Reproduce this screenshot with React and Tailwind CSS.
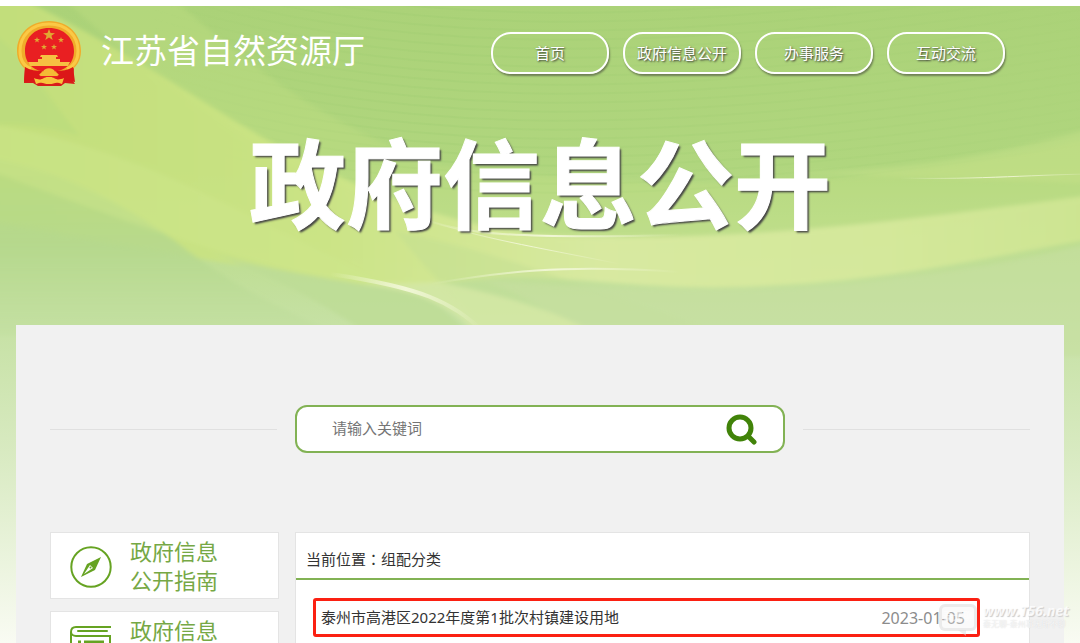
const navItems = ['首页', '政府信息公开', '办事服务', '互动交流'];

const notices = [
  { title: '泰州市高港区2022年度第1批次村镇建设用地', date: '2023-01-05' },
];

const ripples = Array.from({ length: 22 }, (_, i) => i * 9);

function Backdrop() {
  return (
    <svg
      className="absolute inset-0 h-full w-full"
      viewBox="0 0 1080 637"
      preserveAspectRatio="none"
      aria-hidden="true"
    >
      <defs>
        <linearGradient id="base" x1="0" y1="0" x2="0" y2="1">
          <stop offset="0" stopColor="#abd278" />
          <stop offset="0.25" stopColor="#b0d67e" />
          <stop offset="0.35" stopColor="#bbdc8c" />
          <stop offset="0.5" stopColor="#c6e1a4" />
          <stop offset="0.7" stopColor="#d8eac1" />
          <stop offset="1" stopColor="#f9fbf3" />
        </linearGradient>
        <linearGradient id="ribbon" x1="0" y1="0" x2="1" y2="0">
          <stop offset="0" stopColor="#c5e07c" />
          <stop offset="0.3" stopColor="#cde585" />
          <stop offset="0.55" stopColor="#dbeba2" />
          <stop offset="0.8" stopColor="#d7ea9c" />
          <stop offset="1" stopColor="#cfe692" />
        </linearGradient>
        <linearGradient id="low" x1="0" y1="0" x2="0" y2="1">
          <stop offset="0" stopColor="#b6d981" stopOpacity="0.6" />
          <stop offset="0.5" stopColor="#b5d88d" stopOpacity="0.9" />
          <stop offset="1" stopColor="#c2dfa0" stopOpacity="0.5" />
        </linearGradient>
        <linearGradient id="streak" x1="0" y1="0" x2="1" y2="0">
          <stop offset="0" stopColor="#f1f7d6" stopOpacity="0" />
          <stop offset="0.5" stopColor="#f1f7d6" />
          <stop offset="1" stopColor="#f1f7d6" stopOpacity="0" />
        </linearGradient>
        <linearGradient id="ripple" gradientUnits="userSpaceOnUse" x1="150" y1="0" x2="1080" y2="0">
          <stop offset="0" stopColor="#96c76c" stopOpacity="0" />
          <stop offset="0.3" stopColor="#96c76c" />
          <stop offset="1" stopColor="#96c76c" stopOpacity="0.2" />
        </linearGradient>
        <filter id="soft" x="-5%" y="-5%" width="110%" height="110%">
          <feGaussianBlur stdDeviation="2" />
        </filter>
      </defs>

      <rect width="1080" height="637" fill="url(#base)" />

      {/* fine wave lines */}
      <g fill="none" stroke="url(#ripple)" strokeWidth="2" opacity="0.2">
        {ripples.map((y) => (
          <path key={y} d={`M150 ${y - 60} C380 ${y + 10} 640 ${y + 20} 1080 ${y - 50}`} />
        ))}
      </g>

      {/* wide ribbons */}
      <g filter="url(#soft)">
        <path d="M60 -10 L170 -10 C260 70 330 120 440 160 C700 190 900 180 1100 130 L1100 190 C880 220 620 250 440 220 C280 165 170 90 60 -10Z" fill="#c4df80" opacity="0.35" />
        <path d="M-10 -10 L15 -10 C100 30 170 75 240 118 C320 165 420 215 540 229 C740 238 900 215 1100 188 L1100 232 C960 255 900 275 740 281 C640 284 580 270 500 272 C440 276 400 284 360 278 C240 260 120 240 -10 215Z" fill="url(#ribbon)" opacity="0.9" />
        <path d="M-10 152 C60 165 120 195 175 235 C220 270 270 300 345 330 L-10 330Z" fill="url(#low)" />
        <path d="M-10 118 C130 140 230 200 390 280 C240 265 90 200 -10 165Z" fill="#cfe68c" opacity="0.45" />
        <path d="M-10 25 C20 45 40 80 80 130 C50 122 30 118 -10 118Z" fill="#b3d97c" opacity="0.4" />
        <path d="M190 240 C260 262 330 300 370 330 L470 330 C440 290 400 282 360 278 C300 268 230 255 190 240Z" fill="#bddc96" opacity="0.8" />
        <path d="M395 225 C420 255 450 290 480 319 L700 319 C600 290 520 250 395 225Z" fill="#bddc91" opacity="0.35" />
        <path d="M480 274 C640 285 780 290 900 272 C980 262 1040 250 1100 235 L1100 350 L600 350 C560 310 520 285 480 274Z" fill="#c6e0a0" opacity="0.6" />
        <path d="M360 278 C410 284 450 295 478 330 L600 330 C550 300 480 285 440 276Z" fill="#d9eaa6" opacity="0.7" />
        <path d="M740 165 C880 170 960 172 1100 178 L1100 120 C960 160 850 170 740 165Z" fill="#cbe38b" opacity="0.4" />
      </g>

      {/* light streaks */}
      <g fill="none" stroke="url(#streak)">
        <path d="M415 209 C455 229 520 233 680 229" strokeWidth="2" />
        <path d="M430 215 C480 232 530 240 620 258" strokeWidth="1" />
        <path d="M330 268 C425 282 450 296 482 324" strokeWidth="4" />
        <path d="M430 278 C500 266 560 258 680 266" strokeWidth="2" />
        <path d="M900 172 C980 174 1040 168 1100 168" strokeWidth="1" />
      </g>
    </svg>
  );
}

function Emblem() {
  return (
    <svg className="size-[66px] shrink-0" viewBox="0 0 66 66" aria-hidden="true">
      <defs>
        <path id="star" d="M0 -5 L1.3 -1.6 L5 -1.5 L2 .7 L3.1 4.2 L0 2.1 L-3.1 4.2 L-2 .7 L-5 -1.5 L-1.3 -1.6Z" />
      </defs>
      <path d="M9 46 C22 50 44 50 58 46 L57 60 L59 63 L49 62 L45 65 H22 L17 62 L8 62Z" fill="#d91c1b" />
      <circle cx="33" cy="30" r="28" fill="#e91f22" />
      <path d="M33 0 C13 0 1 14 1 30 C1 40 6 47 14 51 L26 55 L40 55 L52 51 C60 47 65 40 65 30 C65 14 53 0 33 0Z M33 7 C48 7 58 17 58 30 C58 42 50 51 33 51 C17 51 9 42 9 30 C9 17 18 7 33 7Z" fill="#f0ac2a" fillRule="evenodd" />
      <path d="M33 3 C15 3 4 15 4 30 C4 39 8 45 15 48 M33 3 C51 3 62 15 62 30 C62 39 58 45 51 48" fill="none" stroke="#fbc945" strokeWidth="3" />
      <g fill="#e0a832">
        <use href="#star" transform="translate(33 14) scale(1.2)" />
        <use href="#star" transform="translate(21 19) scale(.6)" />
        <use href="#star" transform="translate(45 19) scale(.6)" />
        <use href="#star" transform="translate(28 26) scale(.6)" />
        <use href="#star" transform="translate(38 26) scale(.6)" />
      </g>
      <path d="M25 34 H41 L42 36 H24Z M26 36 H40 V38 H26Z M22 38 H44 V41 H22Z M12 41 H54 L52 45 H14Z" fill="#f6c142" />
      <path d="M9 46 C14 49 20 50 26 50 L23 58 L12 60 L8 61Z M57 46 C52 49 46 50 40 50 L43 58 L54 60 L59 61Z" fill="#dc1718" />
      <path d="M27 51 C28 46 38 46 39 51 C43 53 44 54 41 55 H25 C22 54 23 53 27 51Z" fill="#f4ba35" />
      <path d="M18 57 C27 61 27 55 33 56 C39 55 39 61 48 57 L46 63 C39 60 39 63 33 63 C27 63 27 60 20 63Z" fill="#f8c33b" />
    </svg>
  );
}

function CompassIcon() {
  return (
    <svg className="size-[42px] shrink-0" viewBox="0 0 42 42" aria-hidden="true">
      <circle cx="21" cy="21" r="19.7" fill="none" stroke="#66a322" strokeWidth="2" />
      <path d="M31 11 L25 24 L11 31 L17 18Z" fill="#66a322" />
      <path d="M20 19 L23 22 L14 28Z" fill="#fff" />
      <circle cx="20.500" cy="21.500" r="1" fill="#66a322" />
    </svg>
  );
}

function BookIcon() {
  return (
    <svg className="size-[42px] shrink-0" viewBox="0 0 42 42" fill="none" stroke="#66a322" strokeWidth="2" aria-hidden="true">
      <path d="M41 2 H6 C3 2 1 4 1 7 V38 H40 V11 H6 C3 11 1 9 1 7" />
      <path d="M8 6 H37" strokeLinecap="round" />
      <path d="M8 17 H11 M14 17 H34 M8 24 H34" strokeWidth="3" />
    </svg>
  );
}

function SideCard({ icon, lines }) {
  return (
    <a
      href="#"
      className="flex h-[67px] items-start border border-[#e4e4e4] bg-white pl-[19px] text-[22px] leading-[29px] text-[#76a845]"
    >
      <span className="pt-[13px]">{icon}</span>
      <span className="pt-1 pl-[18px]">
        {lines.map((line) => (
          <span key={line} className="block">{line}</span>
        ))}
      </span>
    </a>
  );
}

function Watermark() {
  return (
    <div className="pointer-events-none absolute right-[11px] bottom-3 flex items-start gap-[6px] whitespace-nowrap text-white/80">
      <div className="relative h-[27px] w-[38px] rounded-md border-3 border-[#dcdcdc]/50 bg-[#ededed]/30 text-center text-[10px] leading-[18px] font-bold text-white/60">
        泰无聊
        <span className="absolute right-2 -bottom-2 border-t-6 border-l-8 border-t-[#dcdcdc]/50 border-l-transparent" />
      </div>
      <div>
        <div className="font-['Open_Sans',sans-serif] text-[14px] leading-[14px] font-bold italic [text-shadow:1px_1px_1px_#ccc]">
          www.T56.net
        </div>
        <div className="text-[8px] leading-[12px] [text-shadow:0_0_1px_#ccc]">泰无聊-泰州事无所不聊</div>
      </div>
    </div>
  );
}

export default function App() {
  return (
    <div className="relative flex h-screen flex-col overflow-hidden bg-white pt-[6px] font-['Noto_Sans','Noto_Sans_CJK_SC',sans-serif]">
      <div className="relative min-h-0 flex-1">
        <Backdrop />

        {/* header */}
        <header className="relative flex items-start justify-between pt-[15px] pr-[75px] pl-4">
          <a href="#" className="flex items-start gap-[19px] text-white">
            <Emblem />
            <span className="pt-[9px] text-[33px] leading-[42px]">江苏省自然资源厅</span>
          </a>
          <nav className="flex gap-[14px] pt-[11px]">
            {navItems.map((item) => (
              <a
                key={item}
                href="#"
                className="flex h-[42px] w-[118px] items-center justify-center rounded-[20px] border-2 border-white text-[15px] whitespace-nowrap text-white shadow-[1px_2px_2px_#6f8055] [text-shadow:1px_1px_2px_#333]"
              >
                {item}
              </a>
            ))}
          </nav>
        </header>

        <h1 className="relative pt-[30px] text-center text-[97px] leading-[132px] font-bold text-white [-webkit-text-stroke:1px_#fff] [text-shadow:2px_2px_2px_#444]">
          政府信息公开
        </h1>

        {/* content */}
        <main className="relative mx-4 mt-[76px] bg-[#f1f1f1] px-[34px] pt-20 pb-10">
          <form className="flex items-center gap-[18px]" onSubmit={(e) => e.preventDefault()}>
            <span className="h-px flex-1 bg-[#e0e0e0]" />
            <div className="flex h-12 w-1/2 items-center rounded-xl border-2 border-[#82b254] bg-white pr-[26px] pb-px pl-[35px]">
              <input
                type="text"
                aria-label="请输入关键词"
                placeholder="请输入关键词"
                className="min-w-0 flex-1 bg-transparent text-[15px] outline-none placeholder:text-[#757575]"
              />
              <button type="submit" aria-label="搜索">
                <svg className="size-8" viewBox="0 0 32 32" fill="none" stroke="#418309" strokeLinecap="round">
                  <circle cx="15" cy="15" r="11" strokeWidth="5" />
                  <path d="M23 23 L29 29" strokeWidth="5" />
                </svg>
              </button>
            </div>
            <span className="h-px flex-1 bg-[#e0e0e0]" />
          </form>

          <div className="mt-[79px] flex gap-4">
            <aside className="flex w-[229px] flex-col gap-3">
              <SideCard icon={<CompassIcon />} lines={['政府信息', '公开指南']} />
              <SideCard icon={<BookIcon />} lines={['政府信息']} />
            </aside>

            <section className="min-w-0 flex-1 border border-[#e4e4e4] bg-white text-[15px] text-[#333]">
              <div className="h-[47px] border-b-2 border-[#82b254] pl-[10px] leading-[52px]">
                当前位置<span className="font-['Noto_Sans_CJK_TC',sans-serif]">：</span>组配分类
              </div>
              <ul className="px-[17px] pt-[18px] pb-10">
                {notices.map((notice) => (
                  <li
                    key={notice.title}
                    className="mr-8 flex h-[39px] items-center justify-between rounded-[3px] border-3 border-[#fb2012] pr-3 pl-[5px]"
                  >
                    <a href="#">{notice.title}</a>
                    <time className="text-base text-[#8c8c8c]">{notice.date}</time>
                  </li>
                ))}
              </ul>
            </section>
          </div>
        </main>
      </div>
      <Watermark />
    </div>
  );
}
